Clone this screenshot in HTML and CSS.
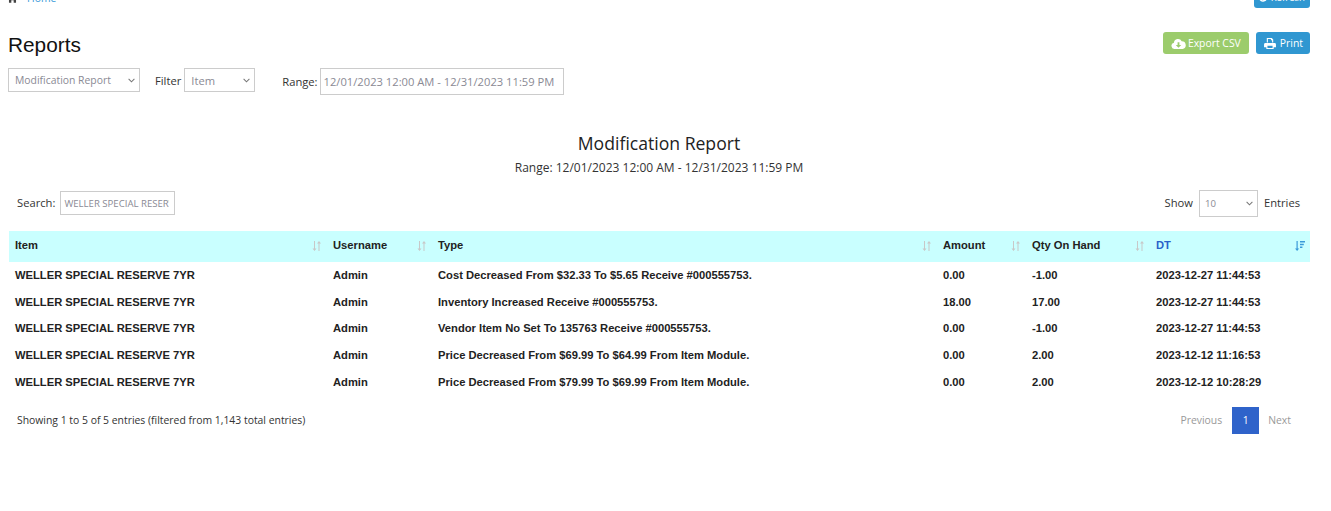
FILE: index.html
```html
<!DOCTYPE html>
<html lang="en">

<head>
    <meta charset="UTF-8">
    <meta name="viewport" content="width=device-width, initial-scale=1.0">
    <title>Reports</title>
    <link rel="stylesheet" href="styles.css">
</head>

<body>
    <div class="top-bar">
        <div class="breadcrumb">
            <svg class="home-icon" viewBox="0 0 14 12"><path d="M7 0 0 6l1 1.2L7 2l6 5.2L14 6l-2-1.700V1h-2v1.600zM2.500 8v4h3V9h3v3h3V8L7 3.600z" fill="#444"/></svg>
            <a href="#">Home</a>
        </div>
        <button class="btn btn-blue btn-refresh">
            <svg class="btn-icon" viewBox="0 0 12 12"><path d="M6 1a5 5 0 1 1-4.600 7l1.700-.7A3.200 3.200 0 1 0 6 2.800V5L2.500 2 6-1z" fill="#fff"/></svg>
            Refresh
        </button>
    </div>

    <div class="title-row">
        <h1>Reports</h1>
        <div class="actions">
            <button class="btn btn-green">
                <svg class="btn-icon cloud" viewBox="0 0 16 12"><path d="M4 12a3.500 3.500 0 0 1-1-6.900A4.500 4.500 0 0 1 11.500 3.500 4.300 4.300 0 0 1 12.500 12zM8 10.500 11 7.500H9V4.500H7v3H5z" fill="#fff" fill-rule="evenodd"/></svg>
                Export CSV
            </button>
            <button class="btn btn-blue btn-print">
                <svg class="btn-icon" viewBox="0 0 13 12"><path d="M3 0h5.500L10 1.500V5H8.800V2.500H7.500V1.200H4.200V5H3zM1.500 5.500h10A1.500 1.500 0 0 1 13 7v3h-2.500v2h-8v-2H0V7a1.500 1.500 0 0 1 1.500-1.500zM3.700 8.500v2.400h5.600V8.500z" fill="#fff" fill-rule="evenodd"/></svg>
                Print
            </button>
        </div>
    </div>

    <div class="filters">
        <select class="field report-select">
            <option>Modification Report</option>
        </select>
        <label class="filter-label">Filter</label>
        <select class="field item-select">
            <option>Item</option>
        </select>
        <label class="range-label">Range:</label>
        <input class="field range-input" type="text" value="12/01/2023 12:00 AM - 12/31/2023 11:59 PM">
    </div>

    <div class="report-head">
        <h2>Modification Report</h2>
        <p>Range: 12/01/2023 12:00 AM - 12/31/2023 11:59 PM</p>
    </div>

    <div class="table-tools">
        <div class="search">
            <label>Search:</label>
            <input class="field search-input" type="text" value="WELLER SPECIAL RESERVE 7YR">
        </div>
        <div class="show">
            <label>Show</label>
            <select class="field show-select">
                <option>10</option>
            </select>
            <label>Entries</label>
        </div>
    </div>

    <table class="report-table">
        <thead>
            <tr>
                <th class="col-item">Item
                    <svg class="sort-icon" viewBox="0 0 10 10"><path d="M2 0h1v7.500h1.500L2.500 10 .5 7.500H2zM7 0l2 2.500H7.500V10h-1V2.500H5z" fill="#c8c8c8"/></svg>
                </th>
                <th class="col-user">Username
                    <svg class="sort-icon" viewBox="0 0 10 10"><path d="M2 0h1v7.500h1.500L2.500 10 .5 7.500H2zM7 0l2 2.500H7.500V10h-1V2.500H5z" fill="#c8c8c8"/></svg>
                </th>
                <th class="col-type">Type
                    <svg class="sort-icon" viewBox="0 0 10 10"><path d="M2 0h1v7.500h1.500L2.500 10 .5 7.500H2zM7 0l2 2.500H7.500V10h-1V2.500H5z" fill="#c8c8c8"/></svg>
                </th>
                <th class="col-amount">Amount
                    <svg class="sort-icon" viewBox="0 0 10 10"><path d="M2 0h1v7.500h1.500L2.500 10 .5 7.500H2zM7 0l2 2.500H7.500V10h-1V2.500H5z" fill="#c8c8c8"/></svg>
                </th>
                <th class="col-qty">Qty On Hand
                    <svg class="sort-icon" viewBox="0 0 10 10"><path d="M2 0h1v7.500h1.500L2.500 10 .5 7.500H2zM7 0l2 2.500H7.500V10h-1V2.500H5z" fill="#c8c8c8"/></svg>
                </th>
                <th class="col-dt sorted">DT
                    <svg class="sort-icon" viewBox="0 0 10 10"><path d="M1.500 0h1.200v7.500H4.200L2.100 10 0 7.500h1.500zM5 0h5v1.500H5zM5 2.800h3.800v1.500H5zM5 5.600h2.400v1.500H5z" fill="#3a9ad9"/></svg>
                </th>
            </tr>
        </thead>
        <tbody>
            <tr>
                <td>WELLER SPECIAL RESERVE 7YR</td>
                <td>Admin</td>
                <td>Cost Decreased From $32.33 To $5.65 Receive #000555753.</td>
                <td>0.00</td>
                <td>-1.00</td>
                <td>2023-12-27 11:44:53</td>
            </tr>
            <tr>
                <td>WELLER SPECIAL RESERVE 7YR</td>
                <td>Admin</td>
                <td>Inventory Increased Receive #000555753.</td>
                <td>18.00</td>
                <td>17.00</td>
                <td>2023-12-27 11:44:53</td>
            </tr>
            <tr>
                <td>WELLER SPECIAL RESERVE 7YR</td>
                <td>Admin</td>
                <td>Vendor Item No Set To 135763 Receive #000555753.</td>
                <td>0.00</td>
                <td>-1.00</td>
                <td>2023-12-27 11:44:53</td>
            </tr>
            <tr>
                <td>WELLER SPECIAL RESERVE 7YR</td>
                <td>Admin</td>
                <td>Price Decreased From $69.99 To $64.99 From Item Module.</td>
                <td>0.00</td>
                <td>2.00</td>
                <td>2023-12-12 11:16:53</td>
            </tr>
            <tr>
                <td>WELLER SPECIAL RESERVE 7YR</td>
                <td>Admin</td>
                <td>Price Decreased From $79.99 To $69.99 From Item Module.</td>
                <td>0.00</td>
                <td>2.00</td>
                <td>2023-12-12 10:28:29</td>
            </tr>
        </tbody>
    </table>

    <div class="table-foot">
        <div class="info">Showing 1 to 5 of 5 entries (filtered from 1,143 total entries)</div>
        <div class="pager">
            <a href="#" class="page-link page-prev">Previous</a>
            <a href="#" class="page-num">1</a>
            <a href="#" class="page-link">Next</a>
        </div>
    </div>
</body>

</html>
```

FILE: styles.css
```css
html {
    height: 100%;
    overflow: hidden;
}

body {
    font-family: "Open Sans", sans-serif;
    font-size: 11.2px;
    color: #333;
    background: #fff;
    margin: 0;
    padding: 0 21px 0 8px;
    height: 100%;
    overflow: hidden;
}

/* Top bar */
.top-bar {
    display: flex;
    justify-content: space-between;
    align-items: flex-end;
    height: 24px;
    margin-top: -16px;
}

.breadcrumb {
    display: flex;
    align-items: center;
    gap: 9px;
    height: 20px;
    margin-left: -1px;
}

.breadcrumb a {
    color: #3a9ad9;
    text-decoration: none;
    font-size: 10.4px;
}

.home-icon {
    width: 11px;
    height: 10px;
}

.btn {
    display: inline-flex;
    align-items: center;
    gap: 2px;
    border: none;
    border-radius: 3px;
    color: #fff;
    font-family: "Open Sans", sans-serif;
    font-size: 10.4px;
    height: 22px;
    padding: 0 8px;
}

.btn-blue {
    background: #3097d1;
}

.btn-green {
    background: #9ccc6c;
}

.btn-print {
    gap: 4px;
    padding: 0 7px 0 8px;
}

.btn-refresh {
    gap: 3px;
    padding: 0 5px 0 4px;
    font-size: 9.6px;
}

.btn-icon {
    width: 12px;
    height: 11px;
}

.btn-refresh .btn-icon {
    width: 10px;
}

.cloud {
    width: 15px;
}

/* Title */
.title-row {
    display: flex;
    justify-content: space-between;
    margin-top: 24px;
    height: 36px;
}

.title-row h1 {
    font-family: "Liberation Sans", Arial, sans-serif;
    font-size: 20.8px;
    font-weight: 400;
    color: #111;
    margin: 0;
    padding-top: 1px;
    line-height: 23px;
}

.actions {
    display: flex;
    gap: 7px;
}

/* Filters */
.filters {
    display: flex;
    align-items: flex-start;
    height: 27px;
}

.field {
    border: 1px solid #ccc;
    background: #fff;
    color: #8a8a94;
    font-family: "Open Sans", sans-serif;
    font-size: 10.4px;
    box-sizing: border-box;
}

select.field {
    appearance: none;
    background: #fff url("data:image/svg+xml,%3Csvg xmlns='http://www.w3.org/2000/svg' viewBox='0 0 8 5'%3E%3Cpath d='M.7.7 4 4 7.300.7' fill='none' stroke='%23777' stroke-width='1.200'/%3E%3C/svg%3E") no-repeat right 4px center / 7px 5px;
}

.report-select {
    width: 132px;
    height: 24px;
    padding-left: 6px;
}

.item-select {
    width: 71px;
    height: 24px;
    padding-left: 6px;
    font-size: 11.2px;
}

.filter-label {
    margin: 0 3px 0 15px;
    line-height: 26px;
}

.range-label {
    margin: 0 2px 0 27px;
    line-height: 27px;
}

.range-input {
    width: 244px;
    height: 27px;
    padding: 0 3px;
    font-size: 11.2px;
}

/* Report heading */
.report-head {
    text-align: center;
    margin-top: 36px;
}

.report-head h2 {
    font-size: 17.6px;
    font-weight: 400;
    line-height: 24px;
    margin: 0;
    color: #222;
}

.report-head p {
    margin: 4px 0 0;
    font-size: 12px;
    line-height: 17px;
}

/* Search and page size */
.table-tools {
    display: flex;
    justify-content: space-between;
    align-items: center;
    height: 26px;
    margin-top: 14px;
    padding: 0 10px 0 9px;
}

.table-tools label {
    padding-bottom: 2px;
}

.search,
.show {
    display: flex;
    align-items: center;
    gap: 5px;
}

.show {
    gap: 6px;
}

.search-input {
    width: 115px;
    height: 24px;
    padding: 0 5px 0 3px;
    font-size: 9.6px;
}

.show-select {
    width: 59px;
    height: 27px;
    padding-left: 5px;
    font-size: 9.6px;
}

/* Table */
.report-table {
    width: 1301px;
    margin: 15px 0 0 1px;
    border-collapse: collapse;
    table-layout: fixed;
    font-family: "Liberation Sans", Arial, sans-serif;
    font-size: 11.2px;
    font-weight: 700;
}

.report-table th {
    position: relative;
    box-sizing: border-box;
    background: #c9ffff;
    height: 31px;
    padding: 0 6px 4px;
    text-align: left;
    color: #222;
}

.report-table td {
    height: 26.6px;
    padding: 0 6px;
    color: #222;
}

.col-item { width: 318px; }
.col-user { width: 105px; }
.col-type { width: 505px; }
.col-amount { width: 89px; }
.col-qty { width: 124px; }

.report-table .sorted {
    color: #2a62c9;
}

.sort-icon {
    position: absolute;
    right: 5px;
    top: 10px;
    width: 10px;
    height: 10px;
}

/* Footer */
.table-foot {
    display: flex;
    justify-content: space-between;
    align-items: center;
    margin-top: 12px;
    padding-left: 9px;
    font-size: 10.4px;
}

.pager {
    display: flex;
    align-items: center;
}

.pager a {
    text-decoration: none;
    font-size: 10.4px;
}

.page-link {
    color: #999;
    padding: 0 19px 0 9px;
}

.page-prev {
    padding: 0 10px 0 0;
}

.page-num {
    display: flex;
    align-items: center;
    justify-content: center;
    width: 27px;
    height: 27px;
    background: #2f63ca;
    color: #fff;
}
```
